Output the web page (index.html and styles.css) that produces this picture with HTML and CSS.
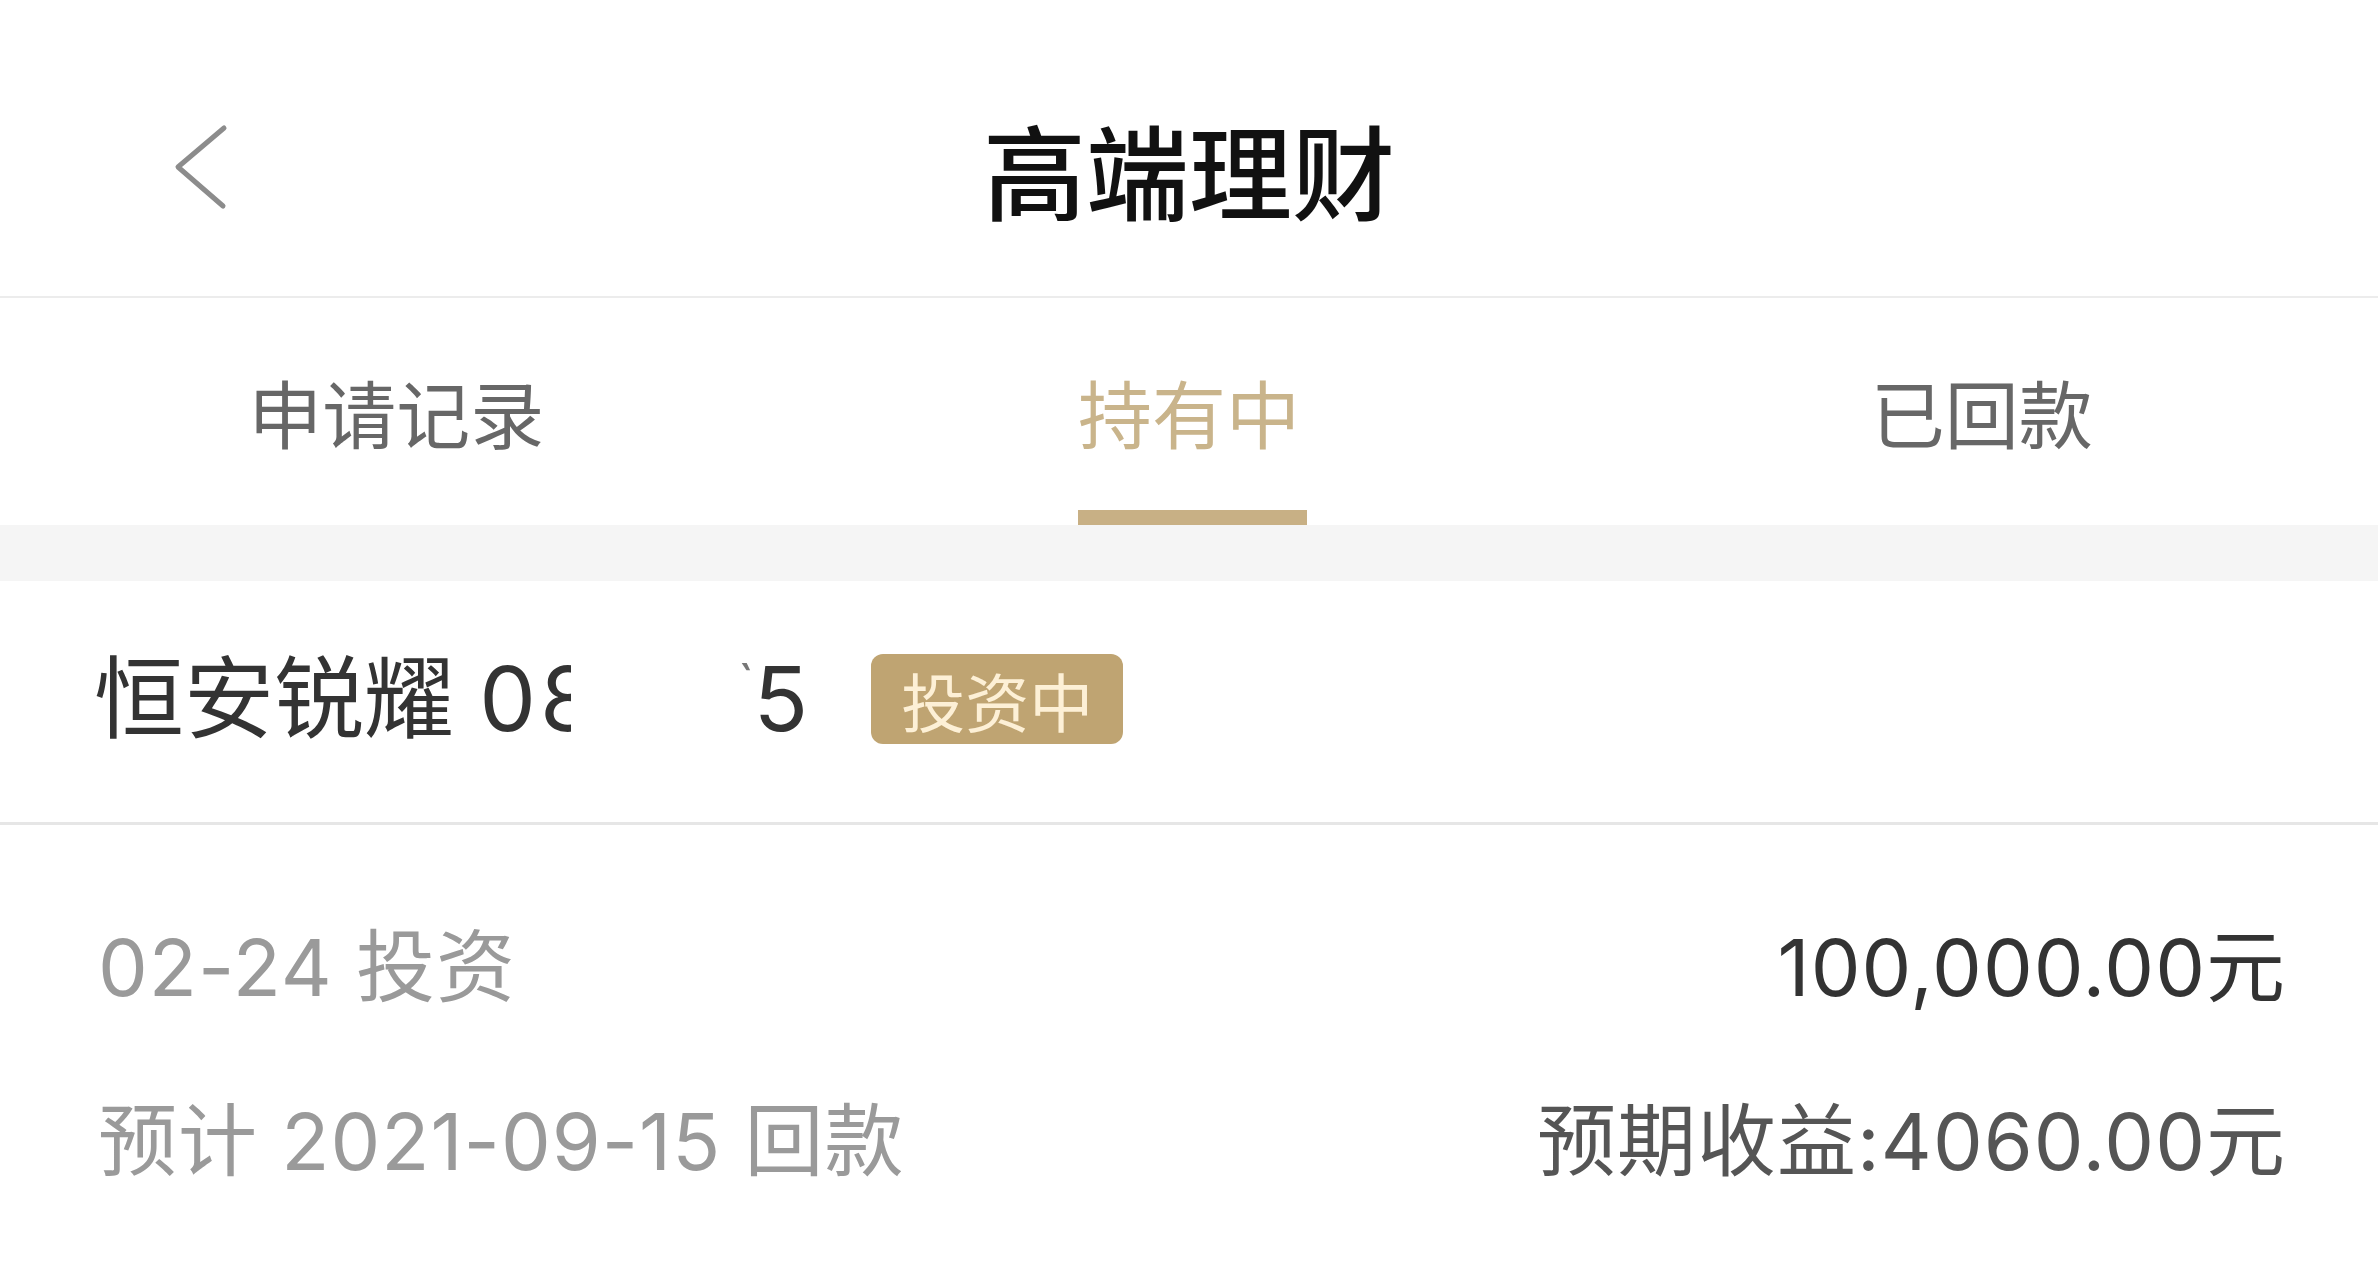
FILE: index.html
```html
<!DOCTYPE html>
<html lang="zh-CN">
<head>
<meta charset="utf-8">
<title>高端理财</title>
<link rel="stylesheet" href="styles.css">
</head>
<body>
<header class="navbar">
  <div class="nav-left">
    <svg class="back" width="62" height="90" viewBox="0 0 62 90" aria-hidden="true">
      <polyline points="54,5 8,44 53,83" fill="none" stroke="#8c8c8c" stroke-width="5" stroke-linecap="round" stroke-linejoin="round"/>
    </svg>
  </div>
  <h1 class="nav-title">高端理财</h1>
  <div class="nav-right"></div>
</header>

<nav class="tabs">
  <div class="tab"><span class="tab-label">申请记录</span><span class="tab-bar"></span></div>
  <div class="tab active"><span class="tab-label">持有中</span><span class="tab-bar"></span></div>
  <div class="tab"><span class="tab-label">已回款</span><span class="tab-bar"></span></div>
</nav>

<div class="band"></div>

<section class="card">
  <div class="card-head">
    <div class="product"><span>恒安锐耀 0</span><span class="clip">8</span><span class="redact"></span><span class="tick">ˋ</span><span>5</span></div>
    <span class="badge">投资中</span>
  </div>
  <div class="card-body">
    <div class="row">
      <span class="muted">02-24 投资</span>
      <span class="amount">100,000.00元</span>
    </div>
    <div class="row">
      <span class="muted">预计 2021-09-15 回款</span>
      <span class="income">预期收益:4060.00元</span>
    </div>
  </div>
</section>
</body>
</html>
```

FILE: styles.css
```css
* { box-sizing: border-box; }

html, body {
  margin: 0;
  padding: 0;
  background: #ffffff;
}

body {
  font-family: "Inter", "Noto Sans CJK SC", sans-serif;
  color: #333333;
}

.navbar {
  height: 298px;
  display: grid;
  grid-template-columns: 1fr auto 1fr;
  align-items: center;
  padding-top: 40px;
  border-bottom: 2px solid #ececec;
}

.nav-left {
  padding-left: 170px;
  display: flex;
  align-items: center;
}

.back { display: block; }

.nav-title {
  margin: 0;
  font-family: "Noto Sans CJK SC", sans-serif;
  font-weight: 500;
  font-size: 103px;
  line-height: 1;
  color: #111111;
}

.tabs {
  display: grid;
  grid-template-columns: repeat(3, 1fr);
  height: 227px;
}

.tab {
  display: flex;
  flex-direction: column;
  align-items: center;
  padding-top: 76px;
}

.tab-label {
  font-family: "Noto Sans CJK SC", sans-serif;
  font-size: 74px;
  line-height: 1;
  color: #676767;
}

.tab-bar {
  margin-top: 62px;
  height: 15px;
  width: 229px;
  background: transparent;
}

.tab.active .tab-label { color: #c9b48b; }
.tab.active .tab-bar {
  background: #c8b085;
  transform: translateX(4px);
}

.band {
  height: 56px;
  background: #f5f5f5;
}

.card-head {
  height: 244px;
  display: flex;
  align-items: center;
  padding: 0 92px 6px 94px;
  border-bottom: 3px solid #e6e6e6;
}

.product {
  display: flex;
  align-items: center;
  font-size: 90px;
  line-height: 1;
  color: #333333;
  white-space: pre;
}

.clip {
  display: inline-block;
  width: 0.34em;
  overflow: hidden;
  margin-left: 4px;
}

.redact {
  display: inline-block;
  width: 165px;
}

.tick {
  font-size: 50px;
  color: #777;
  align-self: flex-start;
  margin-top: 4px;
}

.badge {
  margin-left: 63px;
  height: 90px;
  padding: 0 30px;
  border-radius: 12px;
  background: #bfa472;
  color: #fdf0d6;
  font-family: "Noto Sans CJK SC", sans-serif;
  font-size: 64px;
  line-height: 90px;
}

.card-body {
  padding: 103px 92px 0 98px;
  display: flex;
  flex-direction: column;
  gap: 95px;
}

.row {
  display: flex;
  justify-content: space-between;
  align-items: center;
  font-size: 79px;
  line-height: 1;
  letter-spacing: 1px;
}

.muted { color: #9a9a9a; }
.amount { color: #333333; }
.income { color: #555555; }
```
